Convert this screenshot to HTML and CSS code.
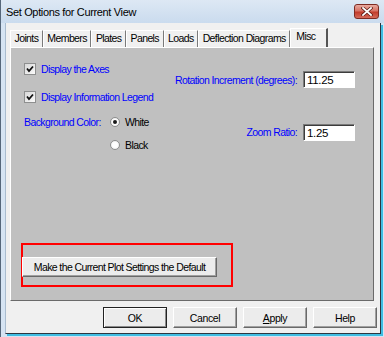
FILE: index.html
```html
<!DOCTYPE html>
<html lang="en">
<head>
    <meta charset="UTF-8">
    <title>Set Options for Current View</title>
    <link rel="stylesheet" href="styles.css">
</head>
<body>
    <div class="window">
        <div class="titlebar">
            <span class="title">Set Options for Current View</span>
            <span class="close">
                <svg width="12" height="9" viewBox="0 0 12 9">
                    <path d="M2 1 L10 8 M10 1 L2 8" stroke="#5a1a14" stroke-width="3.2" stroke-linecap="square"/>
                    <path d="M2 1 L10 8 M10 1 L2 8" stroke="#ffffff" stroke-width="1.8" stroke-linecap="square"/>
                </svg>
            </span>
        </div>
        <div class="client">
            <div class="tabs">
                <span class="tab">Joints</span>
                <span class="tab">Members</span>
                <span class="tab">Plates</span>
                <span class="tab">Panels</span>
                <span class="tab">Loads</span>
                <span class="tab">Deflection Diagrams</span>
                <span class="tab active">Misc</span>
            </div>
            <div class="panel">
                <div class="top">
                    <div class="left">
                        <div class="row">
                            <span class="check">
                                <svg width="8" height="8" viewBox="0 0 8 8"><path d="M1 3.5 L3 6 L7 1.5" fill="none" stroke="#111" stroke-width="1.8"/></svg>
                            </span>
                            <span class="blue">Display the Axes</span>
                        </div>
                        <div class="row r2">
                            <span class="check">
                                <svg width="8" height="8" viewBox="0 0 8 8"><path d="M1 3.5 L3 6 L7 1.5" fill="none" stroke="#111" stroke-width="1.8"/></svg>
                            </span>
                            <span class="blue">Display Information Legend</span>
                        </div>
                        <div class="row r3">
                            <span class="blue bg-label">Background Color:</span>
                            <span class="radio on"></span>
                            <span>White</span>
                        </div>
                        <div class="row r4">
                            <span class="radio"></span>
                            <span>Black</span>
                        </div>
                    </div>
                    <div class="fields">
                        <span class="blue">Rotation Increment (degrees):</span>
                        <span class="field">11.25</span>
                        <span class="blue">Zoom Ratio:</span>
                        <span class="field">1.25</span>
                    </div>
                </div>
                <div class="highlight">
                    <button class="btn wide">Make the Current Plot Settings the Default</button>
                </div>
            </div>
            <div class="actions">
                <button class="btn default">OK</button>
                <button class="btn">Cancel</button>
                <button class="btn"><u>A</u>pply</button>
                <button class="btn">Help</button>
            </div>
        </div>
    </div>
</body>
</html>
```

FILE: styles.css
```css
body {
    margin: 0;
    font-family: "Liberation Sans", Arial, sans-serif;
    font-size: 10.5px;
    letter-spacing: -0.6px;
    white-space: nowrap;
    color: black;
    background-color: white;
}
.window {
    width: 384px;
    height: 337px;
    box-sizing: border-box;
    display: flex;
    flex-direction: column;
    background-color: #d6e4f3;
    border-left: 1px solid #56677a;
}
.titlebar {
    height: 23px;
    flex-shrink: 0;
    display: flex;
    align-items: center;
    padding-left: 5px;
    background: linear-gradient(#dde8f4, #cadbee);
}
.title {
    font-size: 11px;
    letter-spacing: -0.35px;
}
.close {
    margin-left: auto;
    margin-right: 5px;
    width: 25px;
    height: 15px;
    box-sizing: border-box;
    display: flex;
    align-items: center;
    justify-content: center;
    border: 1px solid #7d2b23;
    border-radius: 3px;
    background: linear-gradient(#e8aaa0, #d77366 45%, #c23c2c 55%, #d46a5a);
}
.client {
    flex: 1;
    margin: 0 3px 3px 4px;
    display: flex;
    flex-direction: column;
    padding: 5px 2px 4px 4px;
    background-color: #f0f0f0;
    border-left: 1px solid #a9bccf;
    border-right: 1px solid #2c3641;
    border-bottom: 1px solid #2c3641;
    box-shadow: 2px 2px 0 #3fbde2;
}
.tabs {
    height: 19px;
    display: flex;
    align-items: flex-end;
}
.tab {
    height: 17px;
    box-sizing: border-box;
    padding: 0 3.5px;
    line-height: 15px;
    border-top: 1px solid #ffffff;
    border-left: 1px solid #ffffff;
    border-right: 1px solid #7a7a7a;
}
.tab.active {
    height: 19px;
    width: 38px;
    padding: 0 5px;
    line-height: 15px;
    border-right: 2px solid #555555;
}
.panel {
    height: 254px;
    margin-right: 4px;
    box-sizing: border-box;
    display: flex;
    flex-direction: column;
    padding: 11px 18px 13px 10px;
    background-color: #c0c0c0;
    border: 1px solid;
    border-color: #ffffff #6a6a6a #6a6a6a #ffffff;
}
.top {
    display: flex;
    justify-content: space-between;
}
.left {
    margin: 2px 0 0 3px;
    display: flex;
    flex-direction: column;
}
.row {
    height: 16px;
    display: flex;
    align-items: center;
    gap: 5px;
}
.r2 {
    margin-top: 12px;
}
.r3 {
    margin-top: 9px;
}
.r4 {
    margin-top: 7px;
    padding-left: 86px;
}
.blue {
    color: #0000ff;
}
.bg-label {
    width: 81px;
}
.check {
    width: 12px;
    height: 12px;
    box-sizing: border-box;
    display: flex;
    align-items: center;
    justify-content: center;
    border: 1px solid #8e8f8f;
    background: linear-gradient(135deg, #d8d8d8, #fbfbfb);
}
.radio {
    width: 10px;
    height: 10px;
    box-sizing: border-box;
    border-radius: 50%;
    border: 1px solid #8e8f8f;
    background: radial-gradient(circle, #ffffff 40%, #e2e2e2);
    display: flex;
    align-items: center;
    justify-content: center;
}
.radio.on::after {
    content: "";
    width: 4px;
    height: 4px;
    border-radius: 50%;
    background-color: #1a1a1a;
}
.fields {
    display: grid;
    grid-template-columns: auto 52px;
    column-gap: 6px;
    row-gap: 11px;
    align-items: center;
    justify-items: end;
}
.field {
    justify-self: stretch;
    height: 17px;
    box-sizing: border-box;
    padding: 1px 0 0 3px;
    line-height: 14px;
    font-size: 11.5px;
    letter-spacing: -0.3px;
    background-color: white;
    border: 1px solid;
    border-color: #7a7a7a #ffffff #ffffff #7a7a7a;
    box-shadow: inset 1px 1px 0 #3c3c3c;
}
.highlight {
    margin-top: auto;
    width: 212px;
    height: 44px;
    box-sizing: border-box;
    padding-top: 12px;
    border: 2px solid #ff0000;
}
.btn {
    width: 64px;
    height: 21px;
    padding: 0;
    font-family: inherit;
    font-size: 10.5px;
    letter-spacing: -0.4px;
    color: black;
    background-color: #ececec;
    border: 1px solid;
    border-color: #ffffff #696969 #696969 #ffffff;
    box-shadow: inset -1px -1px 0 #a0a0a0;
}
.btn.wide {
    width: 195px;
    height: 20px;
    margin-left: -1px;
    letter-spacing: -0.6px;
}
.btn.default {
    border: 1px solid #222222;
    box-shadow: inset 1px 1px 0 #ffffff, inset -1px -1px 0 #8a8a8a;
}
.actions {
    margin-top: 6px;
    padding-right: 1px;
    display: flex;
    justify-content: flex-end;
    gap: 6px;
}
```
